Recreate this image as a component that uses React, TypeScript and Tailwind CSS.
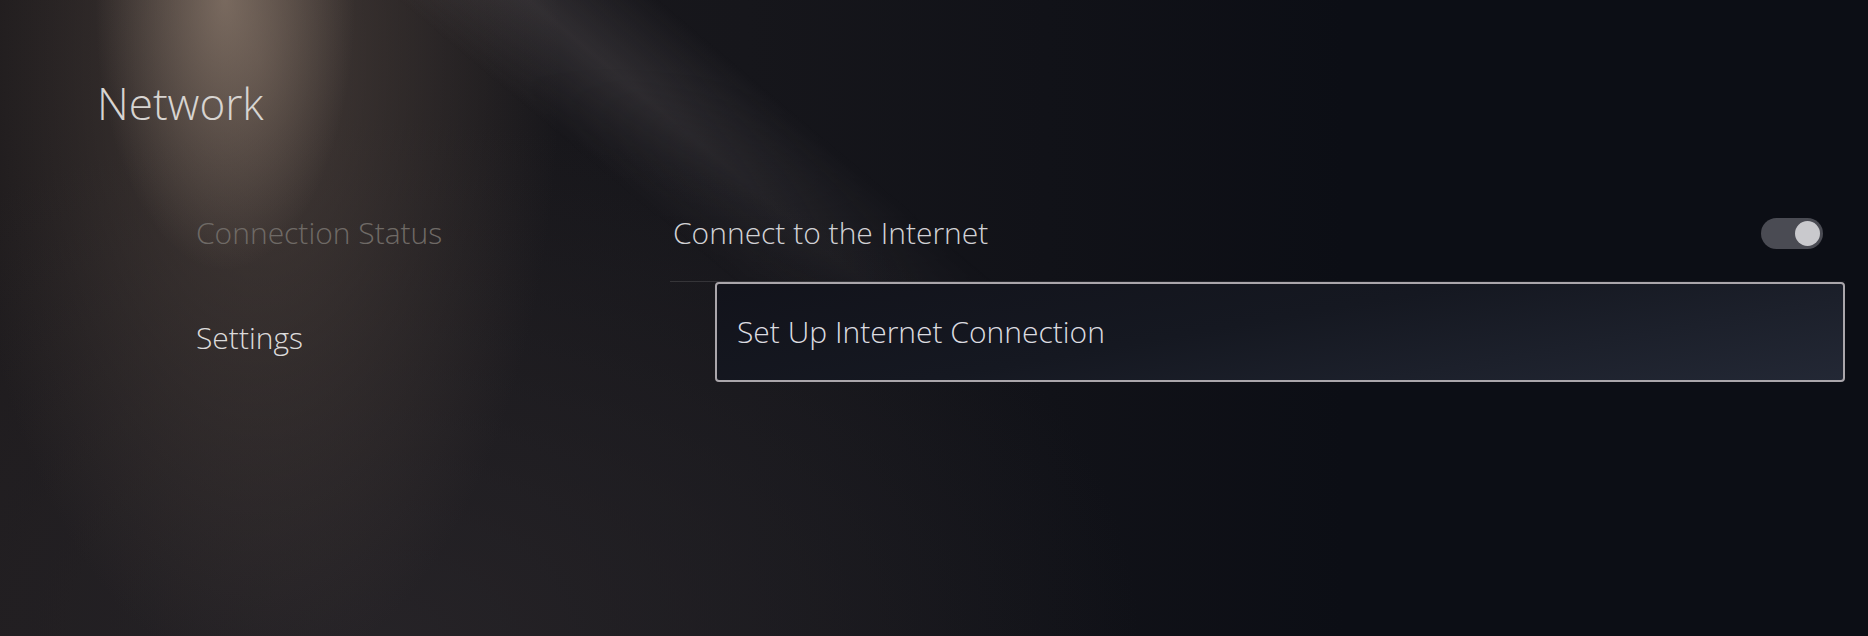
import { useState } from 'react'

const font = { fontFamily: '"Open Sans", "Noto Sans", sans-serif' }

function Toggle({ on }: { on: boolean }) {
  return (
    <div
      className={`w-[62px] h-[31px] rounded-full flex items-center px-[3px] ${
        on ? 'bg-[#4a4b53] justify-end' : 'bg-[#3a3b40] justify-start'
      }`}
    >
      <div className="w-[25px] h-[25px] rounded-full bg-[#c9c9cd]" />
    </div>
  )
}

export default function App() {
  const [connected] = useState(true)
  const [active, setActive] = useState('settings')

  return (
    <div
      style={font}
      className="relative isolate w-full h-[636px] overflow-hidden bg-[#0b0d14] bg-[radial-gradient(ellipse_130px_270px_at_225px_0px,rgba(160,140,124,0.6),transparent),radial-gradient(ellipse_300px_620px_at_260px_60px,rgba(86,73,66,0.7),transparent),radial-gradient(ellipse_760px_520px_at_380px_640px,rgba(40,37,41,0.85),transparent),linear-gradient(90deg,#1d1a1c,#16161b_40%,#0c0e15_72%)] before:absolute before:inset-0 before:-z-10 before:bg-[linear-gradient(40deg,transparent_44%,rgba(125,116,118,0.24)_49%,transparent_54%)] before:[mask-image:linear-gradient(180deg,black_10%,transparent_58%)]"
    >
      {/* Header */}
      <header className="pt-[81px] pl-[97px]">
        <h1 className="text-[44px] leading-none font-light text-[#d7d4d1]">Network</h1>
      </header>

      <div className="mt-[60px] flex">
        {/* Left menu */}
        <nav className="w-[670px] pl-[196px] flex flex-col gap-[9px]">
          <button
            onClick={() => setActive('status')}
            className={`h-[96px] flex items-center text-left text-[30px] leading-none font-light ${
              active === 'status' ? 'text-[#dcdcdc]' : 'text-[#6f6a66]'
            }`}
          >
            Connection Status
          </button>
          <button
            onClick={() => setActive('settings')}
            className={`h-[96px] flex items-center text-left text-[30px] leading-none font-light ${
              active === 'settings' ? 'text-[#dcdbdb]' : 'text-[#6f6a66]'
            }`}
          >
            Settings
          </button>
        </nav>

        {/* Right content */}
        <section className="flex-1 pr-[23px]">
          <div className="h-[96px] pl-[3px] pr-[22px] flex items-center justify-between">
            <span className="text-[30px] leading-none font-light text-[#d2d2d6]">
              Connect to the Internet
            </span>
            <Toggle on={connected} />
          </div>
          <div className="h-px bg-[linear-gradient(90deg,rgba(255,255,255,0.12),rgba(255,255,255,0.04))]" />
          <button className="ml-[45px] w-[calc(100%-45px)] h-[100px] px-[20px] flex items-center border-2 border-[#aaa6ab] rounded-[4px] bg-[linear-gradient(170deg,#12131b_0%,#151821_45%,#232835_100%)] text-left">
            <span className="text-[30px] leading-none font-light text-[#dcdce0]">
              Set Up Internet Connection
            </span>
          </button>
        </section>
      </div>
    </div>
  )
}
